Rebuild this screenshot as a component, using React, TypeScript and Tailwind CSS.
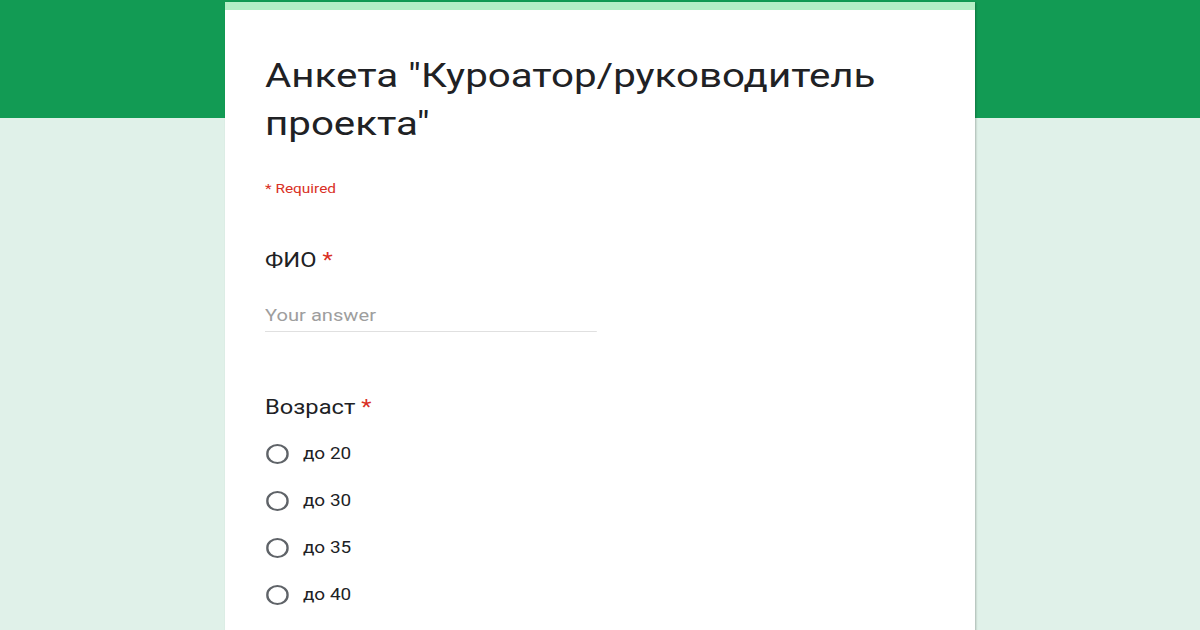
import React from "react";

const options = ["до 20", "до 30", "до 35", "до 40", "до 45"];

export default function App() {
  return (
    <div
      className="w-[1200px] h-[630px] overflow-hidden bg-[linear-gradient(to_bottom,#129b54_118px,#e0f1e9_118px)]"
      style={{ fontFamily: "Roboto, 'Liberation Sans', sans-serif" }}
    >
      {/* Form card */}
      <div className="mx-auto mt-[2px] w-[750px] h-[700px] bg-white border-t-[8px] border-[#b4efc6] shadow-[1px_1px_2px_rgba(0,0,0,0.25)]">
        {/* the source shot is stretched sideways, so the column is too */}
        <div className="ml-[40px] pt-[41px] w-[568px] origin-left scale-x-[1.185]">
          <h1 className="text-[34px] leading-[48px] text-[#202124] font-normal">
            Анкета "Куроатор/руководитель проекта"
          </h1>
          <p className="mt-[32px] text-[13px] leading-[20px] text-[#d93025]">* Required</p>

          {/* ФИО */}
          <div className="mt-[47px] text-[20px] leading-[28px] text-[#202124]">
            ФИО <span className="text-[#d93025]">*</span>
          </div>
          <div className="mt-[29px] w-[280px] h-[29px] border-b border-[#e0e0e0] text-[17px] leading-[24px] text-[#9e9e9e]">
            Your answer
          </div>

          {/* Возраст */}
          <div className="mt-[61px] text-[20px] leading-[28px] text-[#202124]">
            Возраст <span className="text-[#d93025]">*</span>
          </div>
          <div className="mt-[9px] flex flex-col">
            {options.map((o) => (
              <div key={o} className="h-[47px] flex items-center gap-[12px]">
                <div className="ml-[1px] w-[19px] h-[20px] rounded-full border-2 border-[#5f6368]" />
                <span className="text-[16px] text-[#202124]">{o}</span>
              </div>
            ))}
          </div>
        </div>
      </div>
    </div>
  );
}
